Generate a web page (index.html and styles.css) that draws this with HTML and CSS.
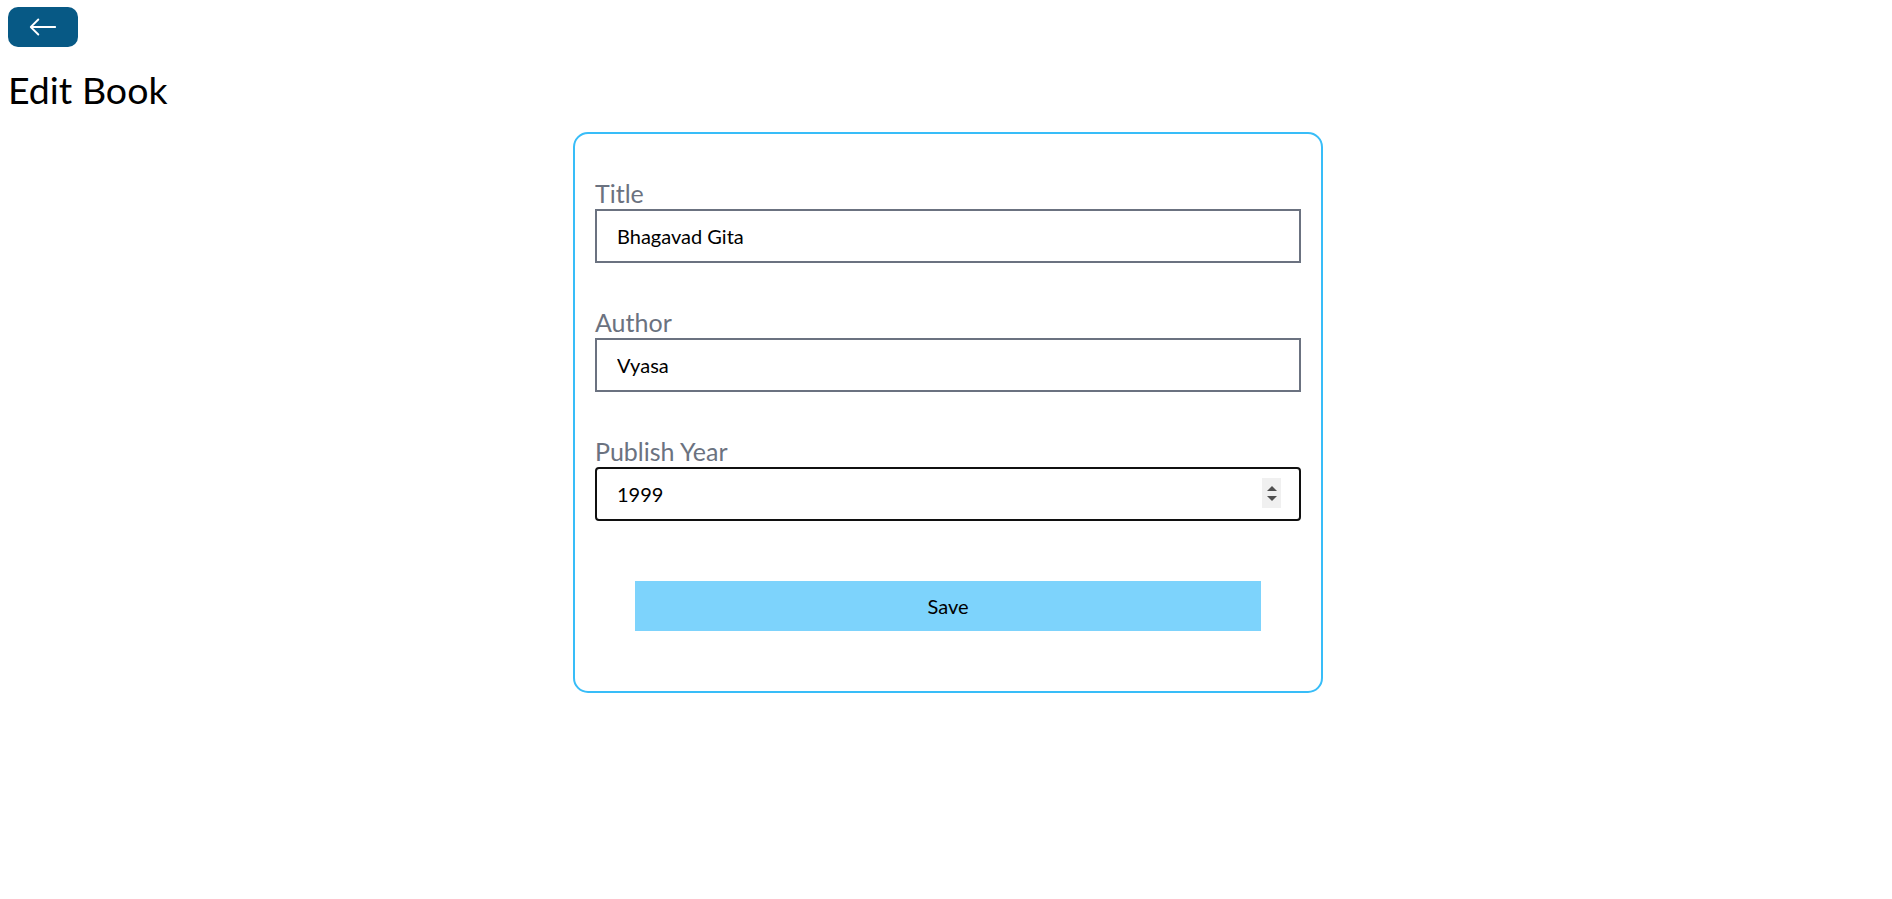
FILE: index.html
```html
<!DOCTYPE html>
<html lang="en">
<head>
    <meta charset="UTF-8">
    <meta name="viewport" content="width=device-width, initial-scale=1.0">
    <title>Edit Book</title>
    <link rel="stylesheet" href="styles.css">
</head>
<body>

<div class="page">
    <!-- Volver a la lista -->
    <div class="back-row">
        <a class="back-btn" href="#">
            <svg class="back-icon" viewBox="0 0 16 16" fill="currentColor">
                <path fill-rule="evenodd" d="M15 8a.5.5 0 0 0-.5-.5H2.707l3.147-3.146a.5.5 0 1 0-.708-.708l-4 4a.5.5 0 0 0 0 .708l4 4a.5.5 0 0 0 .708-.708L2.707 8.5H14.5A.5.5 0 0 0 15 8z"/>
            </svg>
        </a>
    </div>

    <h1>Edit Book</h1>

    <form class="book-form" onsubmit="return false;">
        <div class="field">
            <label>Title</label>
            <input type="text" value="Bhagavad Gita">
        </div>
        <div class="field">
            <label>Author</label>
            <input type="text" value="Vyasa">
        </div>
        <div class="field">
            <label>Publish Year</label>
            <div class="number-wrap">
                <input class="focused" type="text" value="1999">
                <span class="spinner">
                    <span class="tri-up"></span>
                    <span class="tri-down"></span>
                </span>
            </div>
        </div>
        <button class="save-btn">Save</button>
    </form>
</div>

</body>
</html>
```

FILE: styles.css
```css
* {
    box-sizing: border-box;
}
body {
    font-family: 'Lato', 'Open Sans', sans-serif;
    margin: 0;
    padding: 0;
    background-color: #fff;
    color: #000;
}
.page {
    padding: 7px 4px 7px 8px;
}
.back-row {
    display: flex;
}
.back-btn {
    display: flex;
    align-items: center;
    background-color: #075985;
    color: #fff;
    padding: 5px 20px;
    border-radius: 10px;
}
.back-icon {
    width: 30px;
    height: 30px;
}
h1 {
    font-size: 37.5px;
    line-height: 45px;
    font-weight: normal;
    margin: 20px 0;
}
.book-form {
    display: flex;
    flex-direction: column;
    width: 750px;
    margin: 0 auto;
    padding: 20px;
    border: 2px solid #38bdf8;
    border-radius: 15px;
}
.field {
    margin: 20px 0;
}
.field label {
    display: block;
    font-size: 25px;
    line-height: 35px;
    color: #6b7280;
    padding-top: 2px;
    margin-bottom: -2px;
}
.field input {
    display: block;
    width: 100%;
    font-family: inherit;
    font-size: 20px;
    line-height: 30px;
    padding: 10px 20px;
    border: 2px solid #6b7280;
    color: #000;
    outline: none;
}
.number-wrap {
    position: relative;
}
.field input.focused {
    border-color: #101010;
    border-radius: 4px;
}
.spinner {
    position: absolute;
    top: 11px;
    right: 20px;
    width: 19px;
    height: 30px;
    background-color: #f0f0f0;
    display: flex;
    flex-direction: column;
    align-items: center;
    justify-content: center;
    gap: 5px;
}
.tri-up {
    width: 0;
    height: 0;
    border-left: 5px solid transparent;
    border-right: 5px solid transparent;
    border-bottom: 5px solid #505050;
}
.tri-down {
    width: 0;
    height: 0;
    border-left: 5px solid transparent;
    border-right: 5px solid transparent;
    border-top: 5px solid #505050;
}
.save-btn {
    margin: 40px;
    padding: 10px;
    background-color: #7dd3fc;
    border: none;
    font-family: inherit;
    font-size: 20px;
    line-height: 30px;
    color: #000;
}
```
